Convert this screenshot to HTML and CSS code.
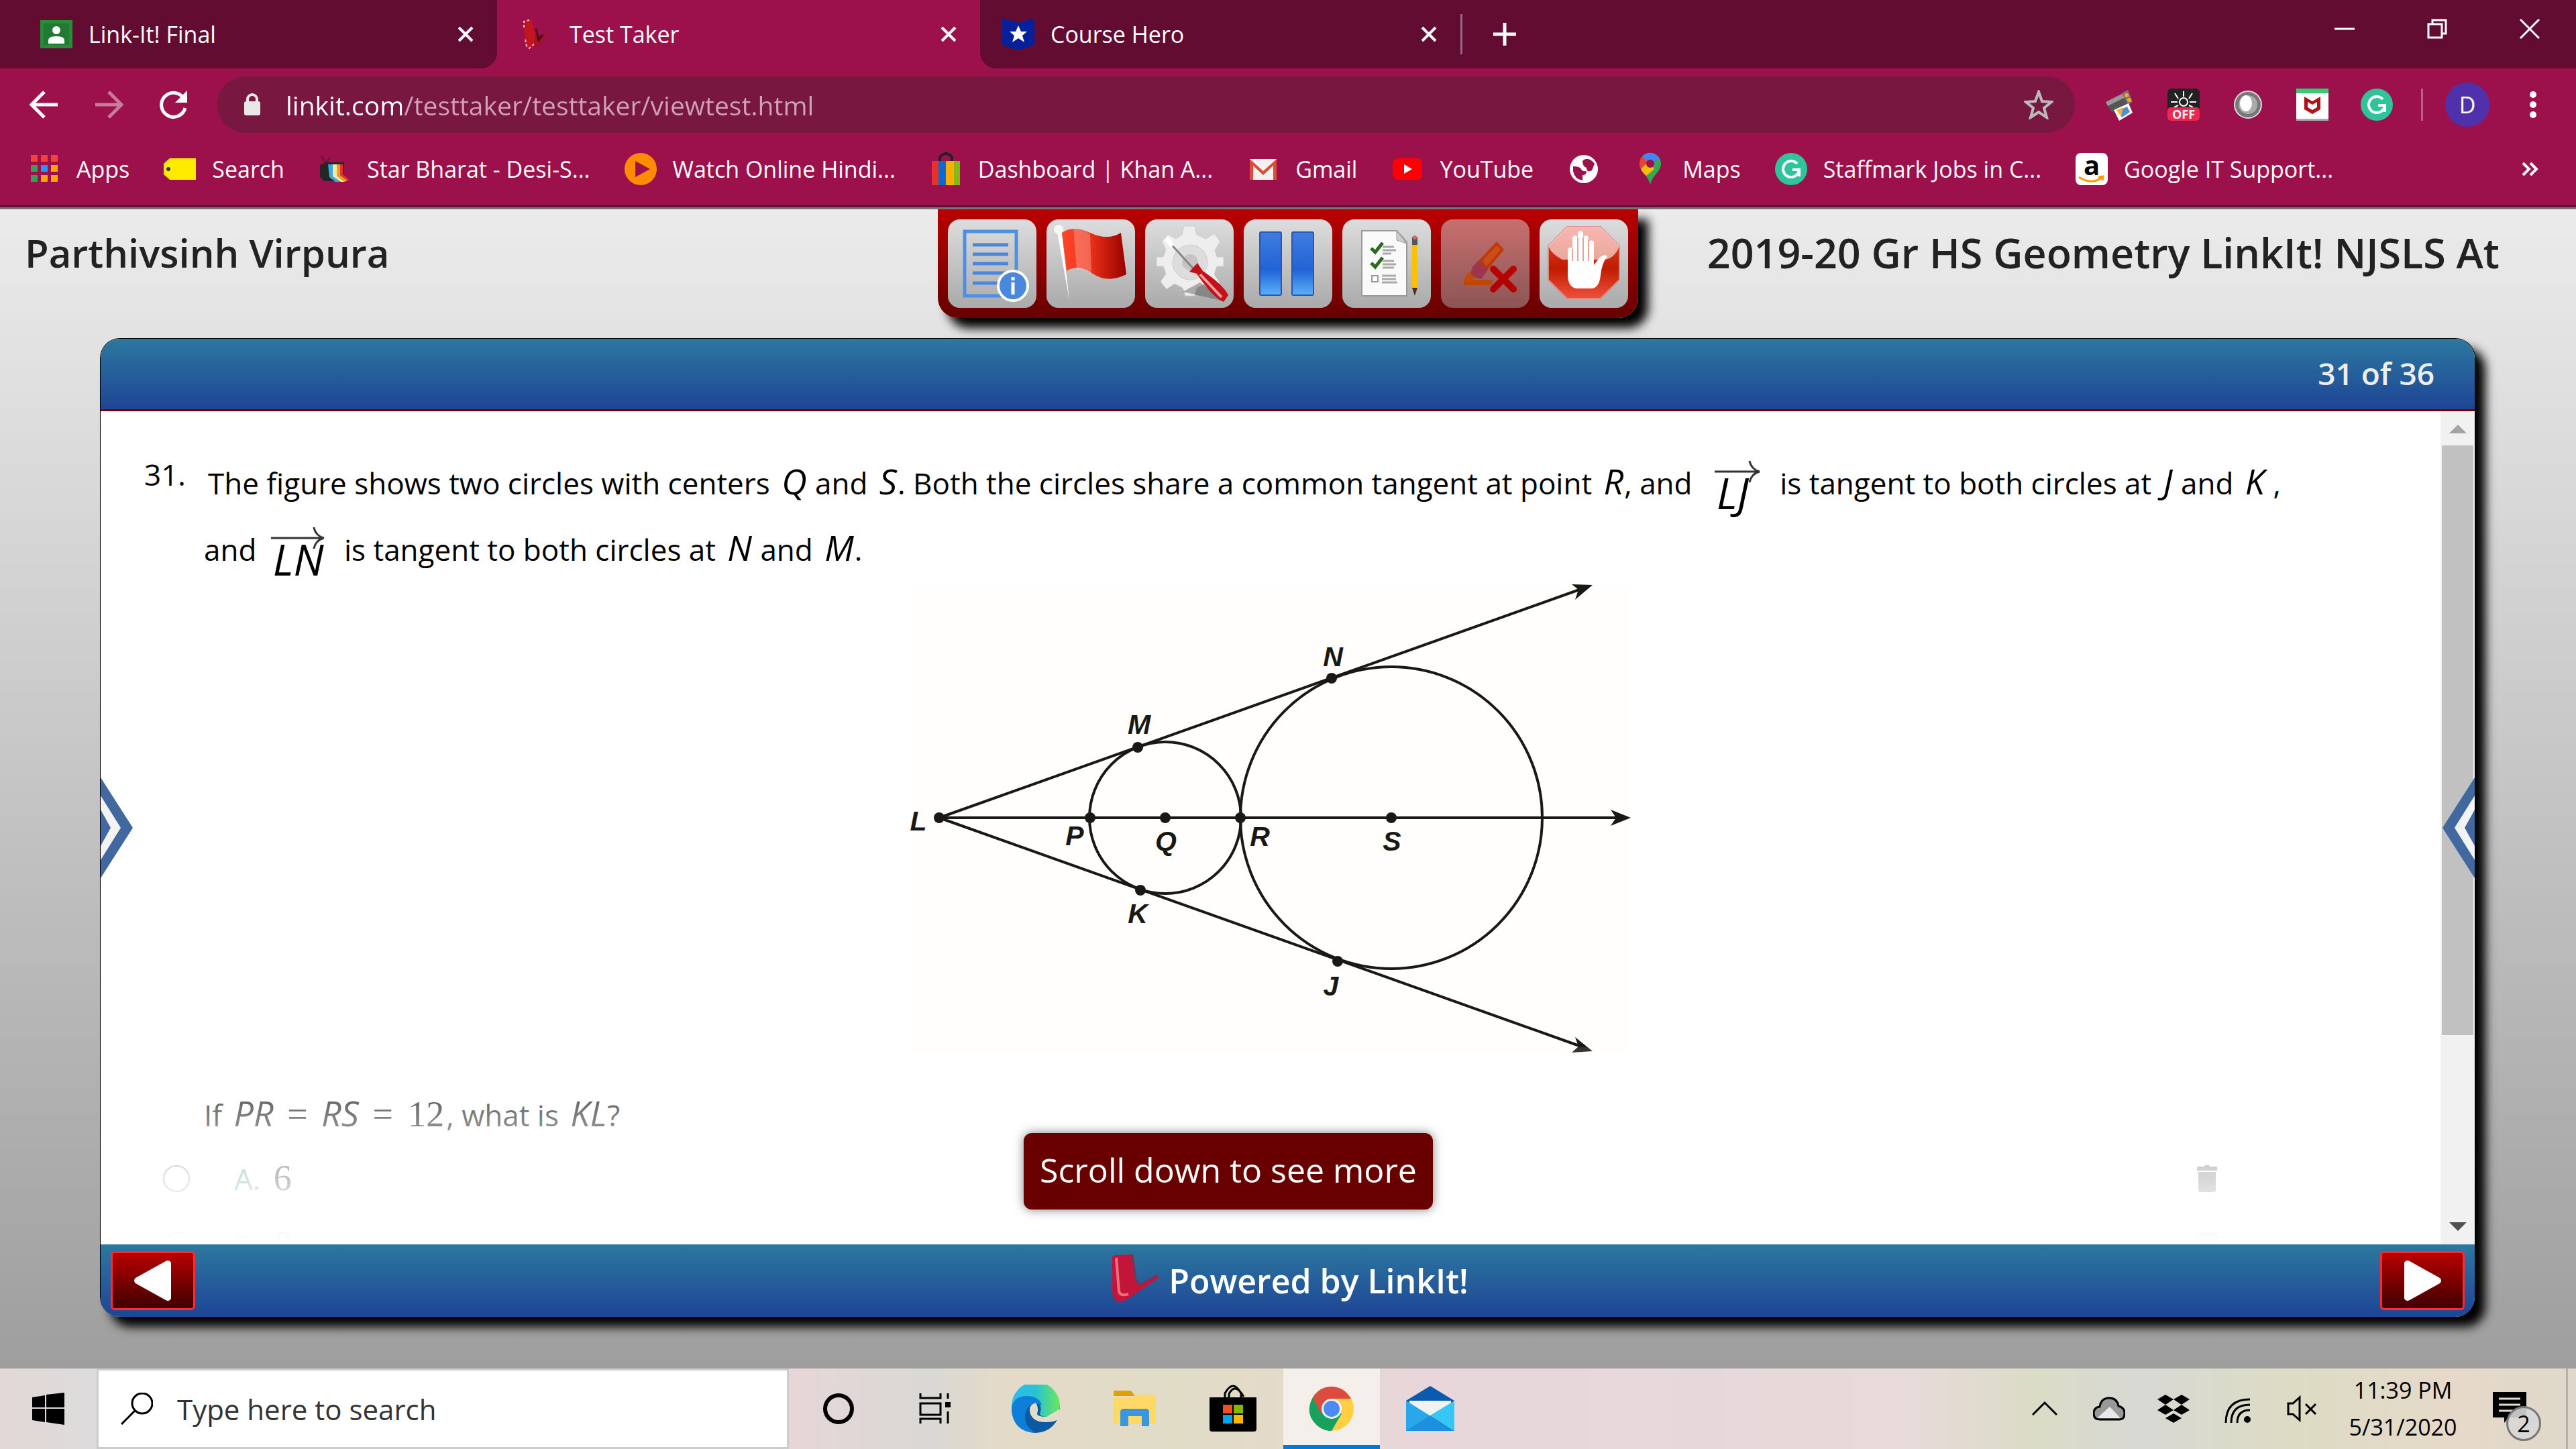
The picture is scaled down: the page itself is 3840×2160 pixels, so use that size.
FILE: index.html
```html
<!DOCTYPE html>
<html lang="en">
<head>
    <meta charset="UTF-8">
    <meta name="viewport" content="width=device-width, initial-scale=1.0">
    <title>Test Taker</title>
    <link rel="stylesheet" href="styles.css">
</head>
<body>
    <!-- Browser window -->
    <header class="browser">
        <div class="tab-bar">
            <div class="tab tab-first">
                <svg class="icon" viewBox="0 0 48 48"><rect y="3" width="48" height="42" fill="#2b8a3a"/><rect x="5" y="8" width="38" height="32" fill="#1f7a34"/><circle cx="24" cy="18" r="6" fill="#fff"/><path d="M12 38v-5q0-6 12-6t12 6v5z" fill="#fff"/></svg>
                <span class="tab-title">Link-It! Final</span>
                <button class="tab-close" aria-label="Close tab"><svg viewBox="0 0 24 24"><path d="M2 2l20 20M22 2L2 22"/></svg></button>
            </div>
            <div class="tab tab-active">
                <svg class="icon" viewBox="0 0 48 48"><path d="M4 5l12-2 6 29 4 2-14 11q-6 0-6-8z" fill="#c4141f"/><path d="M4 14V5l8-2M6 32l2 10 4 3 8-7" fill="none" stroke="#f2c4c8" stroke-width="2" stroke-dasharray="4 3"/><path d="M22 16l4 16 14-14-13 22-8 2z" fill="#a81020"/><path d="M22 16l4 16 6-7" fill="none" stroke="#4a0a18" stroke-width="3"/></svg>
                <span class="tab-title">Test Taker</span>
                <button class="tab-close" aria-label="Close tab"><svg viewBox="0 0 24 24"><path d="M2 2l20 20M22 2L2 22"/></svg></button>
            </div>
            <div class="tab tab-last">
                <svg class="icon" viewBox="0 0 48 48"><path d="M0 0l24 7L48 0v40l-24 8L0 40z" fill="#04209a"/><path d="M24 11l4 9h9l-7 6 3 10-9-6-9 6 3-10-7-6h9z" fill="#fff"/></svg>
                <span class="tab-title">Course Hero</span>
                <button class="tab-close" aria-label="Close tab"><svg viewBox="0 0 24 24"><path d="M2 2l20 20M22 2L2 22"/></svg></button>
            </div>
            <button class="new-tab" aria-label="New tab"><svg viewBox="0 0 36 36"><path d="M18 1v34M1 18h34"/></svg></button>
            <div class="window-buttons">
                <button aria-label="Minimize"><svg viewBox="0 0 30 30"><path d="M0 15h30"/></svg></button>
                <button aria-label="Restore"><svg viewBox="0 0 30 30"><path d="M2 8h20v20H2zM8 8V2h20v20h-6"/></svg></button>
                <button aria-label="Close"><svg viewBox="0 0 30 30"><path d="M1 1l28 28M29 1L1 29"/></svg></button>
            </div>
        </div>

        <div class="toolbar">
            <button class="nav-button" aria-label="Back"><svg viewBox="0 0 44 44"><path d="M42 22H5M22 3L3 22l19 19"/></svg></button>
            <button class="nav-button faded" aria-label="Forward"><svg viewBox="0 0 44 44"><path d="M2 22h37M22 3l19 19-19 19"/></svg></button>
            <button class="nav-button" aria-label="Reload"><svg viewBox="0 0 44 44"><path d="M38 13A18 18 0 1 0 40 27" /><path d="M43 1v18H25z" fill="#fff" stroke="none"/></svg></button>
            <div class="omnibox">
                <svg class="lock" viewBox="0 0 24 34"><path d="M5 14V9a7 7 0 0 1 14 0v5" fill="none" stroke="#e8e8e8" stroke-width="4"/><rect y="12" width="24" height="21" rx="3" fill="#e8e8e8"/></svg>
                <input type="text" class="url" aria-label="Address" value="linkit.com/testtaker/testtaker/viewtest.html">
                <svg class="star" viewBox="0 0 44 44"><path d="M22 3l5 14 14 1-11 9 4 14-12-8-12 8 4-14L3 18l14-1z"/></svg>
            </div>
            <div class="extensions">
                <svg class="icon" viewBox="0 0 48 48"><path d="M4 20L32 6l9 16-28 14z" fill="#555"/><path d="M4 20L32 6l3 6L7 26z" fill="#999"/><path d="M28 7l9-5 7 18-7 4z" fill="#777"/><circle cx="35" cy="10" r="3" fill="#f5a623"/><circle cx="39" cy="17" r="3" fill="#f5a623"/><path d="M16 32l22-10 6 14-20 12z" fill="#fff"/><path d="M22 33l14-6 4 8-12 8z" fill="#4a8fdc"/><path d="M20 32l10-4-3 14z" fill="#f2b233"/></svg>
                <svg class="icon" viewBox="0 0 48 48"><rect width="48" height="48" rx="6" fill="#222"/><path d="M24 4v8M11 7l5 8M37 7l-5 8M5 20h10M33 20h10M10 28l6-3M38 28l-6-3" stroke="#fff" stroke-width="2"/><circle cx="24" cy="20" r="6" fill="none" stroke="#fff" stroke-width="2"/><rect y="28" width="48" height="20" rx="5" fill="#f0264f"/><text x="24" y="45" class="off-text">OFF</text></svg>
                <svg class="icon" viewBox="0 0 48 48"><circle cx="24" cy="24" r="20" fill="#777" stroke="#ddd" stroke-width="2"/><circle cx="24" cy="24" r="14" fill="#aaa"/><ellipse cx="21" cy="22" rx="9" ry="12" fill="#fff"/></svg>
                <svg class="icon" viewBox="0 0 48 48"><rect width="48" height="48" rx="3" fill="#fff"/><path d="M0 0h48v7H0z" fill="#34cc70"/><path d="M12 12l12 7 12-7v19l-12 7-12-7zM17 20v8l7 4 7-4v-8l-7 4z" fill="#b01116" fill-rule="evenodd"/><path d="M0 45h48v3H0z" fill="#aaa"/></svg>
                <svg class="icon" viewBox="0 0 48 48"><circle cx="24" cy="24" r="24" fill="#2fc49a"/><path d="M33 16a12 12 0 1 0 3 9H26M36 25v10" fill="none" stroke="#fff" stroke-width="4"/></svg>
            </div>
            <button class="profile">D</button>
            <button class="menu" aria-label="Menu"><svg viewBox="0 0 10 40"><circle cx="5" cy="5" r="5"/><circle cx="5" cy="20" r="5"/><circle cx="5" cy="35" r="5"/></svg></button>
        </div>

        <nav class="bookmarks">
            <a href="#"><svg class="icon" viewBox="0 0 48 48"><path d="M4 3h10v10H4zM19 3h10v10H19zM34 3h10v10H34z" fill="#f44336"/><path d="M4 18h10v10H4zM4 33h10v10H4z" fill="#34a058"/><path d="M19 18h10v10H19z" fill="#2196f3"/><path d="M34 18h10v10H34zM19 33h10v10H19zM34 33h10v10H34z" fill="#f9a602"/></svg>Apps</a>
            <a href="#"><svg class="icon" viewBox="0 0 48 48"><path d="M9 8h39v32H9L0 32V16z" fill="#ffeb00"/><circle cx="7" cy="24" r="3" fill="#333"/></svg>Search</a>
            <a href="#"><svg class="icon" viewBox="0 0 48 48"><path d="M4 5l6 10 8-9" fill="none" stroke="#5a1a30" stroke-width="2"/><path d="M2 18l10-4h26l-2 28H8l-6-6z" fill="#262626"/><path d="M14 17h7v18l12 8h-8l-9-7z" fill="#35a9e0"/><path d="M21 17h6v17l12 9h-6l-12-8z" fill="#f7e9a0"/><path d="M27 17h5v16l11 8-4 2-12-9z" fill="#f39a1f"/><path d="M32 17h4v15l10 8-3 1-11-8z" fill="#e0332c"/></svg>Star Bharat - Desi-S...</a>
            <a href="#"><svg class="icon" viewBox="0 0 48 48"><circle cx="24" cy="24" r="24" fill="#ff8c00"/><path d="M16 12v24l22-12z" fill="#9c104b"/></svg>Watch Online Hindi...</a>
            <a href="#"><svg class="icon" viewBox="0 0 48 48"><path d="M15 14V6q9-10 18 0v8" fill="none" stroke="#222" stroke-width="4"/><path d="M3 12h10v36H3z" fill="#e5322d"/><path d="M13 12h11v36H13z" fill="#0a6ad4"/><path d="M24 12h12v36H24z" fill="#f9ae00"/><path d="M36 12h9v36h-9z" fill="#86b817"/></svg>Dashboard | Khan A...</a>
            <a href="#"><svg class="icon" viewBox="0 0 48 48"><path d="M4 9h40v31H4z" fill="#f2f2f2"/><path d="M4 40V9l20 18L44 9v31h-5V19L24 33 9 19v21z" fill="#dd4b39"/></svg>Gmail</a>
            <a href="#"><svg class="icon" viewBox="0 0 48 48"><rect x="2" y="8" width="44" height="32" rx="8" fill="#f00"/><path d="M19 17v14l12-7z" fill="#fff"/></svg>YouTube</a>
            <a href="#" aria-label="Bookmark"><svg class="icon" viewBox="0 0 48 48"><circle cx="24" cy="24" r="21" fill="#fff"/><path d="M8 20q10 0 12 4t8 3q0 6-6 6v8q-12-2-14-14zM22 12q8-8 18 4l-4 10q-8 4-8-4-6-2-6-10z" fill="#9c104b"/></svg></a>
            <a href="#"><svg class="icon" viewBox="0 0 48 48"><path d="M24 48C22 34 8 28 8 16a16 16 0 0 1 32 0c0 12-14 18-16 32z" fill="#34a853"/><path d="M24 16L12 27Q8 22 8 16q0-6 4-11z" fill="#ea4335"/><path d="M12 5a16 16 0 0 1 26 3L24 16z" fill="#4285f4"/><path d="M10 24l12-12 8 12-12 10q-6-5-8-10z" fill="#fbbc04"/><circle cx="24" cy="16" r="6" fill="#9c104b"/></svg>Maps</a>
            <a href="#"><svg class="icon" viewBox="0 0 48 48"><circle cx="24" cy="24" r="24" fill="#2fc49a"/><path d="M33 16a12 12 0 1 0 3 9H26M36 25v10" fill="none" stroke="#fff" stroke-width="4"/></svg>Staffmark Jobs in C...</a>
            <a href="#"><svg class="icon" viewBox="0 0 48 48"><rect width="48" height="48" rx="8" fill="#fff"/><text x="24" y="33" class="amazon-text">a</text><path d="M5 36q18 12 34 1M34 36l7-1-1 6" fill="none" stroke="#ff9900" stroke-width="3"/></svg>Google IT Support...</a>
            <button class="more-bookmarks" aria-label="More bookmarks"><svg viewBox="0 0 26 20"><path d="M3 1l9 9-9 9M14 1l9 9-9 9"/></svg></button>
        </nav>
    </header>

    <!-- Test page -->
    <main class="page">
        <div class="page-top">
            <h1 class="student">Parthivsinh Virpura</h1>
            <div class="tools">
                <button class="tool" aria-label="Directions"><svg viewBox="0 0 132 132"><path d="M25 18h77v96H25z" fill="none" stroke="#4d8fe4" stroke-width="5"/><path d="M37 38h53M37 52h53M37 66h53M37 80h53M37 95h40" stroke="#4a86dd" stroke-width="5"/><circle cx="97" cy="99" r="22" fill="#4a88e0" stroke="#fff" stroke-width="4"/><path d="M97 94v18M97 86v5" stroke="#fff" stroke-width="5"/></svg></button>
                <button class="tool" aria-label="Flag"><svg viewBox="0 0 132 132"><defs><linearGradient id="flag"><stop offset="0" stop-color="#ff4628"/><stop offset=".4" stop-color="#f0351a"/><stop offset="1" stop-color="#990000"/></linearGradient></defs><path d="M15 14h7l12 106z" fill="#fff"/><circle cx="18" cy="15" r="7" fill="#f7f7f7"/><path d="M23 20q16-12 42 0t46 0l8 62q-28 14-50-1t-39-4z" fill="url(#flag)"/><path d="M40 14q14 0 25 8l2 58q-12-6-22-5z" fill="#fff" opacity=".25"/></svg></button>
                <button class="tool" aria-label="Tools"><svg viewBox="0 0 132 132"><g fill="#eee" stroke="#ccc"><path d="M58 10h16l3 13 14 6 12-8 9 12-8 13 3 10h10v14h-10l-4 12 8 12-10 10-11-8-13 6-3 12H60l-4-12-12-6-12 8-9-11 8-12-4-11H17V56h10l4-11-6-12 9-11 12 7 9-6z"/><circle cx="67" cy="64" r="26" fill="#ddd"/></g><circle cx="67" cy="64" r="12" fill="#c4c4c4"/><path d="M56 108l62 14-36-28z" fill="#444" opacity=".4"/><path d="M36 34l40 44" stroke="#888" stroke-width="3"/><path d="M29 31l6-5 9 12-6 4z" fill="#fff"/><path d="M66 78l12-13 8 12q30 20 38 36l-7 10q-16-6-40-42z" fill="#c4101a"/><path d="M82 82l32 34" stroke="#f2a0a0" stroke-width="4"/></svg></button>
                <button class="tool" aria-label="Pause"><svg viewBox="0 0 132 132"><defs><linearGradient id="bar" x2="0" y2="1"><stop offset="0" stop-color="#3f7ce0"/><stop offset=".6" stop-color="#2264d6"/><stop offset="1" stop-color="#5cb0fa"/></linearGradient></defs><g fill="url(#bar)" stroke="#2458b8" stroke-width="2"><rect x="24" y="19" width="32" height="94" rx="2"/><rect x="72" y="19" width="32" height="94" rx="2"/></g></svg></button>
                <button class="tool" aria-label="Review"><svg viewBox="0 0 132 132"><path d="M29 17h52l15 17v80H29z" fill="#fafafa" stroke="#999" stroke-width="2"/><path d="M81 17v14l15 5z" fill="#ccc" stroke="#999"/><path d="M60 41h17M60 46h20M60 51h13M60 62h17M60 67h20M60 72h17M59 84h21M59 89h21M59 94h23" stroke="#aaa" stroke-width="3"/><path d="M43 43l6 6 11-14M43 65l6 6 11-14" fill="none" stroke="#2b6b1c" stroke-width="5"/><path d="M44 84h9v9h-9z" fill="#fff" stroke="#999" stroke-width="2"/><path d="M104 38h8v64h-8z" fill="#ffc000"/><path d="M104 26h8v12h-8z" fill="#555"/><circle cx="108" cy="27" r="3" fill="#d66"/><path d="M104 102h8l-4 12z" fill="#4a3420"/></svg></button>
                <button class="tool tool-disabled" aria-label="Highlighter"><svg viewBox="0 0 132 132"><path d="M34 90h42v8H34z" fill="#ff8c00"/><path d="M54 64l29-31 11 12-28 34z" fill="#e8700c"/><path d="M62 62l21-23 6 6-21 25z" fill="#ff9a30"/><path d="M46 72l10-11 14 14-10 14-16-4z" fill="#b06a9a"/><path d="M34 90l8-12 8 8-8 10z" fill="#ff9500"/><path d="M78 74l30 30M108 74l-30 30" stroke="#e80000" stroke-width="10" stroke-linecap="round"/></svg></button>
                <button class="tool" aria-label="Stop"><svg viewBox="0 0 132 132"><defs><linearGradient id="stop" x2="0" y2="1"><stop offset="0" stop-color="#f04a3a"/><stop offset=".58" stop-color="#bf1c00"/><stop offset="1" stop-color="#f0503c"/></linearGradient></defs><path d="M41 11h50l28 29v50l-28 28H41L13 90V40z" fill="url(#stop)" stroke="#d88" stroke-width="2"/><path d="M41 11h50l28 29q-8 20-24 20H34Q18 52 13 40z" fill="#fff" opacity=".6"/><path d="M42 44q4-4 7 0v-17q4-6 8 0v-7q4-6 8 0v7q5-6 8 0v6q6-4 8 1v34l6-8q8-10 14-5-8 10-10 28-2 20-14 20H55q-12-2-13-18z" fill="#fff"/><path d="M49 44v18M57 27v35M65 27v35M73 30v32" stroke="#e8a49c" stroke-width="2"/></svg></button>
            </div>
            <h2 class="test-name">2019-20 Gr HS Geometry LinkIt! NJSLS At</h2>
        </div>

        <section class="panel">
            <div class="panel-head">31 of 36</div>
            <div class="panel-body">
                <div class="question">
                    <div class="number">31.</div>
                    <div class="content">
                        <p class="stem">
                            <span class="stem-first">The figure shows two circles with centers <i>Q</i> and <i>S</i>. Both the circles share a common tangent at point <i>R</i>, and <span class="ray ray-short"><svg viewBox="0 0 90 34" preserveAspectRatio="xMaxYMid slice"><path d="M0 17h88M74 1q3 13 15 16-12 3-15 16"/></svg><i>LJ</i></span> is tangent to both circles at <i>J</i> and <i>K</i> ,</span><br>
                            and <span class="ray"><svg viewBox="0 0 90 34" preserveAspectRatio="xMaxYMid slice"><path d="M0 17h88M74 1q3 13 15 16-12 3-15 16"/></svg><i>LN</i></span> is tangent to both circles at <i>N</i> and <i>M</i>.
                        </p>
                        <svg class="figure" viewBox="0 0 1074 698">
                            <rect width="1074" height="698" fill="#fffefc"/>
                            <g class="lines">
                                <path d="M43 348h1010M43 348L1000 7M43 348l957 341"/>
                                <circle cx="380" cy="348" r="113"/>
                                <circle cx="717" cy="348" r="225"/>
                            </g>
                            <g class="dots">
                                <path d="M1074 348l-30-12 8 12-8 12zM1017 1l-31-1 10 8-5 15zM1017 696l-31 2 10-9-5-14z"/>
                                <circle cx="43" cy="348" r="8"/><circle cx="268" cy="348" r="8"/><circle cx="380" cy="348" r="8"/><circle cx="492" cy="348" r="8"/><circle cx="717" cy="348" r="8"/>
                                <circle cx="339" cy="243" r="8"/><circle cx="628" cy="140" r="8"/><circle cx="343" cy="456" r="8"/><circle cx="637" cy="562" r="8"/>
                            </g>
                            <g class="labels">
                                <text x="12" y="367">L</text><text x="245" y="389">P</text><text x="381" y="397">Q</text><text x="521" y="390">R</text><text x="718" y="397">S</text>
                                <text x="341" y="223">M</text><text x="630" y="122">N</text><text x="339" y="505">K</text><text x="627" y="613">J</text>
                            </g>
                        </svg>
                        <p class="prompt">If <i>PR</i> <b>=</b> <i>RS</i> <b>=</b> <b>12</b>, what is <i>KL</i>?</p>
                        <div class="answers">
                            <div class="answer">
                                <input type="radio" name="answer" id="a">
                                <label for="a">A. <b>6</b></label>
                                <button class="trash" aria-label="Eliminate A"><svg viewBox="0 0 30 40"><path d="M0 2h11l1-2h6l1 2h11v6H0zM2 10h26v27q0 3-3 3H5q-3 0-3-3z"/></svg></button>
                            </div>
                            <div class="answer">
                                <input type="radio" name="answer" id="b">
                                <label for="b">B. <b>8</b></label>
                                <button class="trash" aria-label="Eliminate B"><svg viewBox="0 0 30 40"><path d="M0 2h11l1-2h6l1 2h11v6H0zM2 10h26v27q0 3-3 3H5q-3 0-3-3z"/></svg></button>
                            </div>
                        </div>
                    </div>
                </div>
                <div class="fade"></div>
                <div class="scrollbar">
                    <svg class="up" viewBox="0 0 26 13"><path d="M0 13L13 0l13 13z"/></svg>
                    <div class="thumb"></div>
                    <svg class="down" viewBox="0 0 26 13"><path d="M0 0h26L13 13z"/></svg>
                </div>
                <svg class="side side-left" viewBox="0 0 48 150"><path d="M0 0l48 75-48 75z" fill="#41699f"/><path d="M0 27l30 48L0 123z" fill="#f3f3f3"/><path d="M0 48l15 27L0 102z" fill="#41699f"/></svg>
                <svg class="side side-right" viewBox="0 0 48 150"><path d="M48 0L0 75l48 75z" fill="#41699f"/><path d="M48 27L18 75l30 48z" fill="#f3f3f3"/><path d="M48 48L33 75l15 27z" fill="#41699f"/></svg>
                <button class="scroll-more">Scroll down to see more</button>
            </div>
            <div class="panel-foot">
                <button class="step" aria-label="Previous"><svg viewBox="0 0 58 62"><path d="M56 4v54q-3 5-8 2L3 35q-4-4 0-8L48 2q5-3 8 2z" fill="#fff"/></svg></button>
                <div class="powered">
                    <svg class="logo" viewBox="0 0 72 80"><path d="M0 6q0-4 4-4l26-1 6 40 6 4 25-13q4 0 1 5L22 68Q8 76 3 66L0 58z" fill="#c4143a"/><path d="M6 6l4 50q2 8 14 4" fill="none" stroke="#e8707c" stroke-width="4"/><path d="M30 1l5 38 6 7 26-14" fill="none" stroke="#6b3a58" stroke-width="3"/></svg>
                    <span>Powered by LinkIt!</span>
                </div>
                <button class="step" aria-label="Next"><svg viewBox="0 0 58 62"><path d="M2 4v54q3 5 8 2l45-25q4-4 0-8L10 2Q5-1 2 4z" fill="#fff"/></svg></button>
            </div>
        </section>
    </main>

    <!-- Windows taskbar -->
    <footer class="taskbar">
        <button class="start" aria-label="Start"><svg viewBox="0 0 48 48"><path d="M0 7l19-3v18H0zM21 3l27-3v22H21zM0 24h19v20L0 41zM21 24h27v24l-27-4z"/></svg></button>
        <label class="search">
            <svg viewBox="0 0 48 48"><circle cx="32" cy="16" r="15"/><path d="M21 27L1 47"/></svg>
            <input type="text" placeholder="Type here to search" aria-label="Search">
        </label>
        <div class="apps">
            <button aria-label="Cortana"><svg viewBox="0 0 72 72"><circle cx="36" cy="36" r="20" fill="none" stroke="#000" stroke-width="6"/></svg></button>
            <button aria-label="Task view"><svg viewBox="0 0 72 72"><path d="M11 13v7h30v-7M11 28h30v17H11zM11 58v-7h30v7M52 13v8M52 40v18" fill="none" stroke="#000" stroke-width="3"/><rect x="48" y="26" width="8" height="8"/></svg></button>
            <button aria-label="Edge"><svg viewBox="0 0 72 72"><defs><linearGradient id="edge"><stop offset="0" stop-color="#35b8f5"/><stop offset=".5" stop-color="#26c3d0"/><stop offset="1" stop-color="#6be85a"/></linearGradient></defs><circle cx="36" cy="36" r="36" fill="#0c59a4"/><path d="M0 34a36 36 0 0 1 72-4q0 18-18 18-12 0-12-5 4-8-1-15-5-8-17-8Q6 21 0 34z" fill="url(#edge)"/><path d="M0 34q4-18 24-17 18 1 21 14-18-8-24 10-5 20 15 31Q0 70 0 34z" fill="#0c7fd8"/><path d="M36 27q-10 3-9 12 2 17 24 17 12 0 16-3l5 2 2-20-22 13q-14 0-14-5 3-8-2-16z" fill="#e3dccb"/></svg></button>
            <button aria-label="File Explorer"><svg viewBox="0 0 72 72"><path d="M5 9h26l6 8H5z" fill="#e0a000"/><path d="M5 20h27l5-5h31v43H5z" fill="#ffd866"/><path d="M15 62V41q0-5 5-5h33q5 0 5 5v21H47V47H27v15z" fill="#3a96dd"/></svg></button>
            <button aria-label="Store"><svg viewBox="0 0 72 72"><path d="M24 20V13q12-22 24 0v7M30 20V14q9-18 22 4" fill="none" stroke="#000" stroke-width="3"/><path d="M1 19h70v47q0 4-4 4H5q-4 0-4-4z"/><path d="M21 30h14v13H21z" fill="#f25022"/><path d="M37 30h14v13H37z" fill="#7fba00"/><path d="M21 45h14v13H21z" fill="#00a4ef"/><path d="M37 45h14v13H37z" fill="#ffb900"/></svg></button>
            <button class="running" aria-label="Chrome"><svg viewBox="0 0 72 72"><circle cx="36" cy="36" r="33" fill="#ffce41"/><path d="M36 36L8 19Q-6 45 17 63q8 6 19 6l15-26z" fill="#18a05e"/><path d="M8 19Q18 3 36 3t29 18H36l-15 24z" fill="#dc4b3e"/><circle cx="36" cy="36" r="15" fill="#f5f5f5"/><circle cx="36" cy="36" r="12" fill="#4c8bf5"/></svg></button>
            <button aria-label="Mail"><svg viewBox="0 0 72 72"><path d="M0 24L36 2l36 22v5H0z" fill="#0a5aad"/><path d="M5 24h62v22H5z" fill="#f2f2f2"/><path d="M0 24l72 45H0z" fill="#28a8ea"/><path d="M72 24v45L36 46z" fill="#35c8f5"/><path d="M36 46l36 23H0z" fill="#1c90dc"/></svg></button>
        </div>
        <div class="tray">
            <svg viewBox="0 0 48 48"><path d="M6 33l18-18 18 18" class="line"/></svg>
            <svg viewBox="0 0 48 48"><path d="M10 40q-9 0-9-9t9-10Q12 8 24 8t14 12q9 2 9 11t-8 9z" fill="#999" stroke="#000" stroke-width="3"/><path d="M6 38l19-17 16 17z" fill="#e8e8e8"/></svg>
            <svg viewBox="0 0 48 48"><path d="M12 3l12 7-12 8L0 10zM36 3l12 7-12 8-12-8zM12 18l12 8-12 7-12-7zM36 18l12 8-12 7-12-7zM24 31l12 7-12 7-12-7z"/></svg>
            <svg viewBox="0 0 48 48"><path d="M6 45Q6 10 42 10M14 45q0-27 28-27M23 45q0-19 19-19" class="line"/><circle cx="38" cy="40" r="5"/></svg>
            <svg viewBox="0 0 48 48"><path d="M3 16h7L20 7v34l-10-9H3zM29 17l15 15M44 17L29 32" class="line"/></svg>
        </div>
        <div class="clock"><span>11:39 PM</span><span>5/31/2020</span></div>
        <button class="notifications" aria-label="Notifications"><svg viewBox="0 0 50 50"><path d="M0 0h50v38H24l-7 8v-8H0z"/><path d="M9 10h32M9 19h32M9 28h22" stroke="#e4dccb" stroke-width="3"/></svg><span class="badge">2</span></button>
    </footer>
</body>
</html>
```

FILE: styles.css
```css
* {
    box-sizing: border-box;
}

body {
    margin: 0;
    display: flex;
    flex-direction: column;
    height: 100vh;
    overflow: hidden;
    font-family: "Open Sans", "Noto Sans", sans-serif;
}

button {
    background: none;
    border: none;
    padding: 0;
    font-family: inherit;
    display: block;
}

button svg {
    display: block;
}

input {
    font-family: inherit;
    border: none;
    outline: none;
    padding: 0;
    margin: 0;
}

h1, h2, p {
    margin: 0;
}

.icon {
    width: 48px;
    height: 48px;
    flex: none;
    overflow: visible;
}

/* Browser window */
.browser {
    flex: none;
    background-color: #9c104b;
    color: white;
    border-bottom: 3px solid #777777;
    box-shadow: inset 0 -3px #650c33;
}

.tab-bar {
    display: flex;
    align-items: center;
    height: 102px;
    background-color: #9c104b;
}

.tab {
    display: flex;
    align-items: center;
    height: 102px;
    padding: 0 35px 0 60px;
    background-color: #630c31;
    font-size: 34px;
}

.tab-first {
    width: 741px;
    border-bottom-right-radius: 24px;
}

.tab-active {
    width: 720px;
    padding-left: 36px;
    background-color: #9c104b;
}

.tab-last {
    width: 716px;
    padding-left: 33px;
    border-bottom-left-radius: 24px;
}

.tab-title {
    flex: 1;
    margin-left: 24px;
}

.tab-close svg {
    width: 24px;
    height: 24px;
    stroke: white;
    stroke-width: 4;
}

.new-tab {
    display: flex;
    align-items: center;
    align-self: stretch;
    padding-left: 48px;
    background: linear-gradient(#94688a, #94688a) left center / 3px 60px no-repeat #630c31;
}

.new-tab svg {
    width: 36px;
    height: 36px;
    stroke: white;
    stroke-width: 5;
}

.window-buttons {
    display: flex;
    flex: 1;
    align-self: stretch;
    align-items: flex-start;
    justify-content: flex-end;
    gap: 108px;
    padding: 28px 54px 0 0;
    background-color: #630c31;
}

.window-buttons svg {
    width: 30px;
    height: 30px;
    fill: none;
    stroke: white;
    stroke-width: 3;
}

.toolbar {
    display: flex;
    align-items: center;
    height: 108px;
    padding: 0 59px 0 44px;
}

.nav-button {
    margin-right: 52px;
}

.nav-button svg {
    width: 44px;
    height: 44px;
    fill: none;
    stroke: white;
    stroke-width: 5;
}

.faded {
    opacity: .45;
}

.omnibox {
    display: flex;
    align-items: center;
    flex: 1;
    height: 84px;
    margin-left: -8px;
    padding: 0 32px 0 40px;
    border-radius: 42px;
    background-color: #78173f;
}

.lock {
    width: 24px;
    height: 34px;
}

.url {
    flex: 1;
    height: 60px;
    margin-left: 38px;
    font-size: 39px;
    color: white;
    background: linear-gradient(90deg, white 173px, #d0a2b5 173px);
    -webkit-background-clip: text;
    background-clip: text;
    -webkit-text-fill-color: transparent;
}

.star {
    width: 44px;
    height: 44px;
    fill: none;
    stroke: #bbbbbb;
    stroke-width: 4;
}

.extensions {
    display: flex;
    gap: 48px;
    margin-left: 42px;
    padding-right: 45px;
    background: linear-gradient(#c05c88, #c05c88) right / 3px 48px no-repeat;
}

.off-text {
    font: bold 18px "Open Sans", sans-serif;
    fill: white;
    text-anchor: middle;
}

.amazon-text {
    font: bold 40px "Open Sans", sans-serif;
    text-anchor: middle;
}

.profile {
    width: 66px;
    height: 66px;
    margin-left: 33px;
    border-radius: 50%;
    background-color: #4f32ab;
    color: white;
    font-size: 34px;
}

.menu {
    margin-left: 60px;
}

.menu svg {
    width: 10px;
    height: 40px;
    fill: white;
}

.bookmarks {
    display: flex;
    align-items: center;
    gap: 51px;
    height: 99px;
    padding: 0 56px 15px 42px;
}

.bookmarks a {
    display: flex;
    align-items: center;
    gap: 24px;
    color: white;
    font-size: 34px;
    text-decoration: none;
    white-space: nowrap;
}

.more-bookmarks {
    margin-left: auto;
}

.more-bookmarks svg {
    width: 26px;
    height: 20px;
    fill: none;
    stroke: white;
    stroke-width: 4;
}

/* Test page */
.page {
    display: flex;
    flex-direction: column;
    flex: 1;
    min-height: 0;
    padding: 0 150px 77px 149px;
    background: linear-gradient(#ebebeb, #9e9e9e);
}

.page-top {
    display: grid;
    grid-template-columns: 1fr auto 1fr;
    align-items: start;
    margin: 0 -112px 30px;
}

.student,
.test-name {
    padding-top: 27px;
    font-size: 58px;
    font-weight: 600;
    line-height: 76px;
    color: #222222;
    white-space: nowrap;
}

.test-name {
    padding-right: 76px;
    font-size: 61px;
    text-align: right;
}

.tools {
    display: flex;
    gap: 15px;
    padding: 15px;
    border-radius: 0 0 30px 30px;
    background: linear-gradient(#bb0000, #660000);
    box-shadow: 15px 15px 15px black;
}

.tool {
    width: 132px;
    height: 132px;
    border-radius: 18px;
    background: linear-gradient(#dddddd, #aaaaaa);
}

.tool-disabled {
    opacity: .5;
}

.panel {
    display: flex;
    flex-direction: column;
    flex: 1;
    min-height: 0;
    border: 1px solid black;
    border-bottom: none;
    border-radius: 30px;
    background-color: white;
    box-shadow: 15px 15px 15px black;
}

.panel-head {
    height: 108px;
    padding-right: 60px;
    border-bottom: 3px solid #7a0000;
    border-radius: 29px 29px 0 0;
    background: linear-gradient(#2c789f, #1e4596);
    color: #eeeeee;
    font-size: 46px;
    font-weight: 600;
    line-height: 103px;
    text-align: right;
}

.panel-body {
    position: relative;
    flex: 1;
    min-height: 0;
    overflow: hidden;
}

.question {
    display: flex;
    padding: 64px 205px 0 65px;
    font-size: 44px;
}

.number {
    width: 89px;
    line-height: 60px;
}

.content {
    flex: 1;
    min-width: 0;
}

.stem {
    margin-top: -6px;
    line-height: 99px;
    white-space: nowrap;
}

.stem-first {
    padding-left: 6px;
}

.stem i,
.prompt i {
    margin: 0 1px 0 6px;
    font-size: 52px;
    line-height: 50px;
}

.ray {
    position: relative;
    margin: 0 18px 0 10px;
}

.ray-short {
    margin-left: 22px;
    padding-right: 16px;
}

.stem .ray i {
    margin-left: 3px;
    font-size: 64px;
    vertical-align: -22px;
}

.ray svg {
    position: absolute;
    left: 0;
    bottom: 30px;
    width: 100%;
    height: 34px;
    fill: none;
    stroke: #333333;
    stroke-width: 3;
}

.figure {
    display: block;
    width: 1074px;
    height: 698px;
    margin: 2px auto 0;
}

.lines {
    fill: none;
    stroke: #1a1814;
    stroke-width: 4;
}

.dots {
    fill: #1a1814;
}

.labels {
    font: italic bold 41px "Liberation Sans", sans-serif;
    fill: #1a1814;
    text-anchor: middle;
}

.prompt {
    margin: 60px 0 12px;
    line-height: 66px;
}

.prompt b,
.answer b {
    font-family: "Liberation Serif", serif;
    font-size: 54px;
    font-weight: normal;
    line-height: 50px;
}

.prompt b {
    margin: 0 3px 0 8px;
}

.answers {
    margin-left: -61px;
}

.answer {
    display: flex;
    align-items: center;
    height: 99px;
}

.answer input {
    appearance: none;
    width: 40px;
    height: 40px;
    border: 2px solid #777777;
    border-radius: 50%;
}

.answer label {
    flex: 1;
    margin-left: 66px;
    color: #2b8a6a;
}

.answer b {
    margin-left: 8px;
    color: black;
}

.trash {
    margin-right: 179px;
}

.trash svg {
    width: 30px;
    height: 40px;
    fill: #555555;
}

.fade {
    position: absolute;
    right: 51px;
    bottom: 0;
    left: 0;
    height: 294px;
    background: linear-gradient(rgba(255, 255, 255, .1), rgba(255, 255, 255, .55) 40%, rgba(255, 255, 255, .8) 70%, rgba(255, 255, 255, .95) 90%, white);
}

.scrollbar {
    position: absolute;
    top: 0;
    right: 0;
    bottom: 0;
    display: flex;
    flex-direction: column;
    align-items: center;
    width: 51px;
    padding: 20px 0 20px;
    background-color: #f1f1f1;
}

.scrollbar svg {
    width: 26px;
    height: 13px;
}

.up {
    fill: #a3a3a3;
}

.thumb {
    width: 47px;
    height: 879px;
    margin-top: 18px;
    background-color: #c1c1c1;
}

.down {
    margin-top: auto;
    fill: #505050;
}

.side {
    position: absolute;
    top: 546px;
    width: 48px;
    height: 150px;
}

.side-left {
    left: 0;
}

.side-right {
    right: 0;
}

.scroll-more {
    position: absolute;
    bottom: 52px;
    left: 1376px;
    height: 114px;
    padding: 0 24px 4px;
    border-radius: 12px;
    background-color: #690000;
    box-shadow: 0 0 15px rgba(0, 0, 0, .5);
    color: white;
    font-size: 50px;
}

.panel-foot {
    display: flex;
    align-items: center;
    justify-content: space-between;
    height: 108px;
    padding: 0 15px;
    border-radius: 0 0 29px 29px;
    background: linear-gradient(#2c789f, #1e4596);
}

.step {
    display: flex;
    align-items: center;
    justify-content: center;
    width: 126px;
    height: 88px;
    border: 3px solid #ff2a2a;
    border-radius: 6px;
    background: linear-gradient(#b80000, #400000);
}

.step svg {
    width: 58px;
    height: 62px;
}

.powered {
    display: flex;
    align-items: center;
    gap: 12px;
    padding-left: 8px;
    color: white;
    font-size: 50px;
    font-weight: 600;
}

.logo {
    width: 72px;
    height: 80px;
}

/* Windows taskbar */
.taskbar {
    display: flex;
    align-items: center;
    flex: none;
    height: 120px;
    background: linear-gradient(90deg, #e2d8d6, #dcdcdc 4%, #e6d6d8 31%, #d9d8d4 36%, #e4dac8 39%, #e0dcc6 46%, #e6dacb 50%, #e8d6da 55%, #e6d8da 66%, #e8dada 74%, #dadcc6 79%, #d8d8d4 83%, #dcdcc4 89%, #e6d9c9 95%, #dfd8ca);
}

.start {
    width: 144px;
    padding-left: 48px;
}

.start svg {
    width: 48px;
    height: 48px;
}

.search {
    display: flex;
    align-items: center;
    width: 1032px;
    height: 120px;
    padding-left: 33px;
    border: 3px solid #cccccc;
    background-color: white;
}

.search svg {
    width: 48px;
    height: 48px;
    fill: none;
    stroke: black;
    stroke-width: 3;
}

.search input {
    flex: 1;
    margin-left: 36px;
    font-size: 42px;
}

.search input::placeholder {
    color: #333333;
}

.apps {
    display: flex;
    gap: 3px;
    margin: 0 auto 0 2px;
}

.apps button {
    display: flex;
    align-items: center;
    justify-content: center;
    width: 144px;
    height: 120px;
}

.apps svg {
    width: 72px;
    height: 72px;
}

.apps .running {
    background-color: #f4efeb;
    border-bottom: 6px solid #0078d7;
    padding-top: 6px;
}

.tray {
    display: flex;
    gap: 48px;
}

.tray svg {
    width: 48px;
    height: 48px;
}

.line {
    fill: none;
    stroke: black;
    stroke-width: 3;
}

.clock {
    display: flex;
    flex-direction: column;
    align-items: center;
    width: 160px;
    margin-left: 46px;
    font-size: 34px;
    line-height: 55px;
}

.notifications {
    position: relative;
    align-self: stretch;
    width: 112px;
    margin: 0 12px 0 54px;
    border-right: 3px solid #b8b0a4;
}

.notifications svg {
    width: 50px;
    height: 50px;
}

.badge {
    position: absolute;
    top: 56px;
    left: 20px;
    width: 52px;
    height: 52px;
    border: 3px solid #777777;
    border-radius: 50%;
    background-color: rgba(215, 215, 215, .9);
    font-size: 34px;
    line-height: 46px;
    text-align: center;
}
```
